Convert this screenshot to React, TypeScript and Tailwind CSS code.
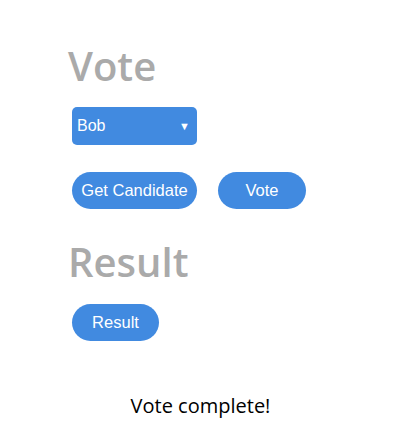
export default function App() {
  return (
    <div className="w-[410px] h-[439px] bg-white" style={{ fontFamily: '"Liberation Sans", Arial, sans-serif' }}>
      <div className="pl-[68px] pt-[40px]">
        <h1 className="font-['Open_Sans',sans-serif] font-semibold text-[40px] leading-[52px] text-[#aaaaaa]">Vote</h1>
        <div className="pl-[4px] mt-[15px]">
          <div className="flex items-center justify-between w-[125px] h-[38px] rounded-[5px] bg-[#418ae0] pl-[5px] pr-[7px] text-white text-[16px]">
            <span>Bob</span>
            <span className="text-[11px]">▼</span>
          </div>
          <div className="flex gap-[21px] mt-[27px]">
            <button className="w-[125px] h-[37px] rounded-full bg-[#418ae0] text-white text-[16.5px]">Get Candidate</button>
            <button className="w-[88px] h-[37px] rounded-full bg-[#418ae0] text-white text-[16.5px]">Vote</button>
          </div>
        </div>
        <h1 className="font-['Open_Sans',sans-serif] font-semibold text-[40px] leading-[52px] text-[#aaaaaa] mt-[27px]">Result</h1>
        <div className="pl-[4px] mt-[16px]">
          <button className="w-[87px] h-[37px] rounded-full bg-[#418ae0] text-white text-[16.5px]">Result</button>
        </div>
      </div>
      <p className="font-['Open_Sans',sans-serif] text-[20px] leading-[28px] text-black text-center w-[401px] mt-[51px]">Vote complete!</p>
    </div>
  );
}
